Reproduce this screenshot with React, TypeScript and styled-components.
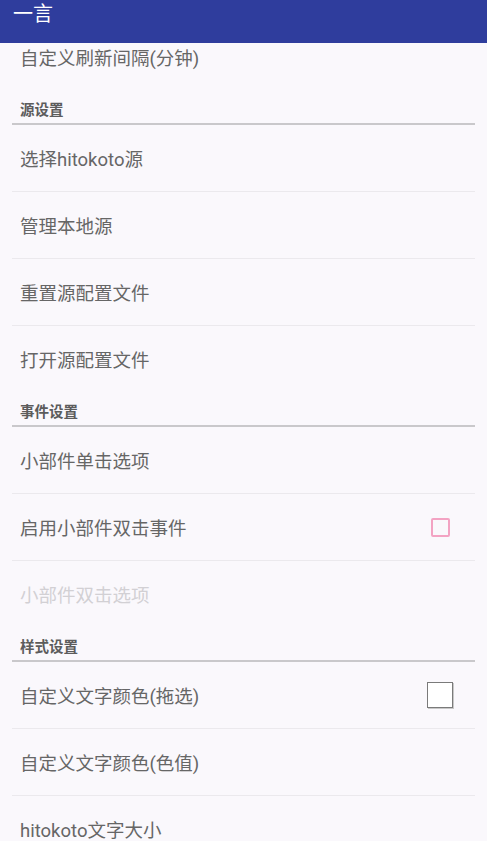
import React from 'react';
import styled, { createGlobalStyle } from 'styled-components';

const GlobalStyle = createGlobalStyle`
  html, body {
    margin: 0;
    padding: 0;
    background: #faf8fc;
  }
  body {
    font-family: Roboto, "Noto Sans CJK SC", "Noto Sans", sans-serif;
  }
`;

const Screen = styled.main`
  display: flex;
  flex-direction: column;
  width: 487px;
  height: 841px;
  overflow: hidden;
  background: #faf8fc;
`;

const AppBar = styled.header`
  flex: 0 0 43px;
  display: flex;
  align-items: flex-start;
  padding: 2px 13px 0;
  box-sizing: border-box;
  background: #2f3d9d;
  color: #fff;
  font-size: 20px;
  line-height: 24px;
  z-index: 1;
`;

const ScrollArea = styled.div`
  flex: 1;
  overflow: hidden;
`;

const List = styled.div`
  display: flex;
  flex-direction: column;
  margin-top: -19px;
`;

const Row = styled.div<{ $last?: boolean }>`
  flex: 0 0 67px;
  display: flex;
  align-items: center;
  justify-content: space-between;
  margin: 0 12px;
  padding: 0 8px;
  box-sizing: border-box;
  border-bottom: 1px solid ${p => (p.$last ? 'transparent' : '#ebe9ed')};
`;

const Title = styled.span<{ $disabled?: boolean }>`
  font-size: 18.5px;
  color: ${p => (p.$disabled ? '#d2d0d4' : '#666666')};
`;

const SectionHeader = styled.div`
  flex: 0 0 34px;
  display: flex;
  align-items: center;
  margin: 0 12px;
  padding: 2px 8px 0;
  box-sizing: border-box;
  border-bottom: 2px solid #c9c8cb;
  font-size: 14.5px;
  font-weight: 700;
  color: #5c5c5c;
`;

const CheckBox = styled.span`
  width: 15px;
  height: 15px;
  margin-right: 17px;
  border: 2px solid #f3a3c3;
  border-radius: 2px;
  box-sizing: content-box;
`;

const Swatch = styled.span`
  width: 24px;
  height: 24px;
  margin-right: 14px;
  background: #fff;
  border: 1px solid #7a7a7a;
  box-shadow: 1px 1px 0 #c8c8c8;
`;

type Item = { title: string; disabled?: boolean; widget?: 'check' | 'swatch' };
type Section = { header?: string; items: Item[] };

const sections: Section[] = [
  { items: [{ title: '自定义刷新间隔(分钟)' }] },
  {
    header: '源设置',
    items: [
      { title: '选择hitokoto源' },
      { title: '管理本地源' },
      { title: '重置源配置文件' },
      { title: '打开源配置文件' },
    ],
  },
  {
    header: '事件设置',
    items: [
      { title: '小部件单击选项' },
      { title: '启用小部件双击事件', widget: 'check' },
      { title: '小部件双击选项', disabled: true },
    ],
  },
  {
    header: '样式设置',
    items: [
      { title: '自定义文字颜色(拖选)', widget: 'swatch' },
      { title: '自定义文字颜色(色值)' },
      { title: 'hitokoto文字大小' },
    ],
  },
];

const App: React.FC = () => {
  return (
    <>
      <GlobalStyle />
      <Screen>
        <AppBar>一言</AppBar>
        <ScrollArea>
          <List>
            {sections.map((section, si) => (
              <React.Fragment key={si}>
                {section.header && <SectionHeader>{section.header}</SectionHeader>}
                {section.items.map((item, ii) => (
                  <Row key={item.title} $last={ii === section.items.length - 1}>
                    <Title $disabled={item.disabled}>{item.title}</Title>
                    {item.widget === 'check' && <CheckBox />}
                    {item.widget === 'swatch' && <Swatch />}
                  </Row>
                ))}
              </React.Fragment>
            ))}
          </List>
        </ScrollArea>
      </Screen>
    </>
  );
};

export default App;
